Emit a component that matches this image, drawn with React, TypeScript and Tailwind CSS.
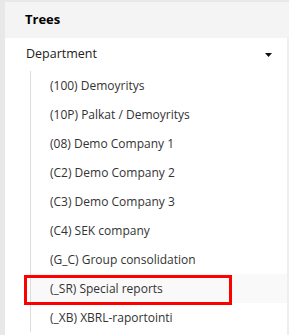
import React from "react";

const items = [
  "(100) Demoyritys",
  "(10P) Palkat / Demoyritys",
  "(08) Demo Company 1",
  "(C2) Demo Company 2",
  "(C3) Demo Company 3",
  "(C4) SEK company",
  "(G_C) Group consolidation",
  "(_SR) Special reports",
  "(_XB) XBRL-raportointi",
];

export default function App() {
  return (
    <div
      className="w-[289px] h-[335px] overflow-hidden bg-[#e8e8e8] pt-[2px] pl-[5px] text-[#333]"
      style={{ fontFamily: '"Open Sans", "Noto Sans", sans-serif' }}
    >
      <div className="h-[36px] bg-[#f4f4f4] flex items-center pl-[20px]">
        <span className="text-[13px] font-bold text-black">Trees</span>
      </div>
      <div className="h-[297px] bg-white border-r-2 border-[#eeeeee]">
        <div className="h-[33px] flex items-center justify-between pl-[21px] pr-[15px]">
          <span className="text-[12.5px] text-[#222]">Department</span>
          <svg width="7" height="4" viewBox="0 0 7 4">
            <polygon points="0,0 7,0 3.5,4" fill="#111" />
          </svg>
        </div>
        <div className="ml-[25px] border-l border-[#dcdcdc]">
          {items.map((t, i) => (
            <div
              key={t}
              className={
                "relative h-[29px] flex items-center pl-[19px] text-[12px] " +
                (i === 7 ? "bg-[#f9f9f9]" : "")
              }
            >
              {t}
              {i === 7 && (
                <div className="absolute left-[-7px] top-[1px] w-[208px] h-[30px] border-[3px] border-[#ff0000]" />
              )}
            </div>
          ))}
        </div>
      </div>
    </div>
  );
}
